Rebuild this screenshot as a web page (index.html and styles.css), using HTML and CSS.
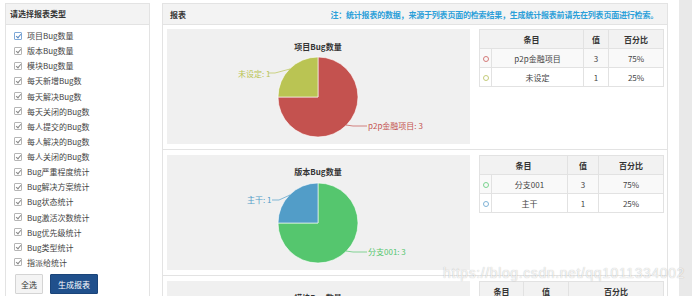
FILE: index.html
```html
<!DOCTYPE html>
<html lang="zh-CN">
<head>
<meta charset="utf-8">
<title>统计报表</title>
<link rel="stylesheet" href="styles.css">
</head>
<body>

<div class="page">

  <!-- report type picker -->
  <aside class="side">
    <div class="side-head">请选择报表类型</div>
    <ul class="types">
      <li class="focus"><span class="cb"></span>项目Bug数量</li>
      <li><span class="cb"></span>版本Bug数量</li>
      <li><span class="cb"></span>模块Bug数量</li>
      <li><span class="cb"></span>每天新增Bug数</li>
      <li><span class="cb"></span>每天解决Bug数</li>
      <li><span class="cb"></span>每天关闭的Bug数</li>
      <li><span class="cb"></span>每人提交的Bug数</li>
      <li><span class="cb"></span>每人解决的Bug数</li>
      <li><span class="cb"></span>每人关闭的Bug数</li>
      <li><span class="cb"></span>Bug严重程度统计</li>
      <li><span class="cb"></span>Bug解决方案统计</li>
      <li><span class="cb"></span>Bug状态统计</li>
      <li><span class="cb"></span>Bug激活次数统计</li>
      <li><span class="cb"></span>Bug优先级统计</li>
      <li><span class="cb"></span>Bug类型统计</li>
      <li><span class="cb"></span>指派给统计</li>
    </ul>
    <div class="btns">
      <button class="btn">全选</button>
      <button class="btn primary">生成报表</button>
    </div>
  </aside>

  <!-- reports -->
  <section class="main">
    <div class="main-head">
      <span class="title">报表</span>
      <span class="note">注：统计报表的数据，来源于列表页面的检索结果，生成统计报表前请先在列表页面进行检索。</span>
    </div>

    <div class="sec">
      <div class="chart">
        <svg width="303" height="115" viewBox="0 0 303 115">
          <text class="ctitle" x="151" y="21">项目Bug数量</text>
          <path d="M151,68 L151,28 A40,40 0 1,1 111,68 Z" fill="#c4524f" stroke="#fff" stroke-width=".6"/>
          <path d="M151,68 L111,68 A40,40 0 0,1 151,28 Z" fill="#bac453" stroke="#fff" stroke-width=".6"/>
          <polyline points="123,40 108,44 101,44" fill="none" stroke="#bac453" stroke-width=".7"/>
          <text class="lbl" x="71" y="48" fill="#bac453">未设定: 1</text>
          <polyline points="179,96 186,97 200,97" fill="none" stroke="#c4524f" stroke-width=".7"/>
          <text class="lbl" x="201" y="100" fill="#c4524f">p2p金融项目: 3</text>
        </svg>
      </div>
      <table class="stat t-a">
        <colgroup><col class="c-dot"><col class="c-name"><col class="c-val"><col class="c-pct"></colgroup>
        <tr><th colspan="2">条目</th><th>值</th><th>百分比</th></tr>
        <tr class="odd"><td><span class="ring red"></span></td><td>p2p金融项目</td><td>3</td><td>75%</td></tr>
        <tr><td><span class="ring olive"></span></td><td>未设定</td><td>1</td><td>25%</td></tr>
      </table>
    </div>

    <div class="sec">
      <div class="chart">
        <svg width="303" height="115" viewBox="0 0 303 115">
          <text class="ctitle" x="151" y="20">版本Bug数量</text>
          <path d="M151,68 L151,28 A40,40 0 1,1 111,68 Z" fill="#55c66e" stroke="#fff" stroke-width=".6"/>
          <path d="M151,68 L111,68 A40,40 0 0,1 151,28 Z" fill="#529dc8" stroke="#fff" stroke-width=".6"/>
          <polyline points="123,40 112,45 105,45" fill="none" stroke="#529dc8" stroke-width=".7"/>
          <text class="lbl" x="80" y="48" fill="#529dc8">主干: 1</text>
          <polyline points="179,96 186,97 200,97" fill="none" stroke="#55c66e" stroke-width=".7"/>
          <text class="lbl" x="201" y="100" fill="#55c66e">分支001: 3</text>
        </svg>
      </div>
      <table class="stat t-b">
        <colgroup><col class="c-dot"><col class="c-name"><col class="c-val"><col class="c-pct"></colgroup>
        <tr><th colspan="2">条目</th><th>值</th><th>百分比</th></tr>
        <tr class="odd"><td><span class="ring green"></span></td><td>分支001</td><td>3</td><td>75%</td></tr>
        <tr><td><span class="ring blue"></span></td><td>主干</td><td>1</td><td>25%</td></tr>
      </table>
    </div>

    <div class="sec">
      <div class="chart">
        <svg width="303" height="115" viewBox="0 0 303 115">
          <text class="ctitle" x="151" y="20">模块Bug数量</text>
        </svg>
      </div>
      <table class="stat t-c">
        <colgroup><col class="c-name"><col class="c-val"><col class="c-pct"></colgroup>
        <tr><th>条目</th><th>值</th><th>百分比</th></tr>
      </table>
    </div>
  </section>

  <div class="scroll"></div>
</div>

<div class="mark">https://blog.csdn.net/qq1011334002</div>

</body>
</html>
```

FILE: styles.css
```css
*{box-sizing:border-box;margin:0;padding:0}
body{
  font-family:"Noto Sans CJK SC","Liberation Sans",sans-serif;
  font-size:8px;color:#333;background:#fff;
  width:692px;height:296px;overflow:hidden;position:relative;
}

/* ---------- LAYOUT ---------- */
.page{display:flex;height:296px;padding-left:5px}
.side{width:145px;margin-top:3px;border:1px solid #e3e3e3;border-bottom:none}
.main{width:506px;margin-left:12px;margin-top:3px;border:1px solid #e3e3e3;border-bottom:none}
.scroll{width:13px;margin-left:11px;background:#e9e9e9}

/* ---------- LEFT PANEL ---------- */
.side-head{
  height:21px;line-height:20px;padding-left:4px;
  background:#f3f3f3;border-bottom:1px solid #e3e3e3;font-weight:bold;color:#333
}
.types{list-style:none;padding:3px 0 0 8px}
.types li{height:15.13px;line-height:15px;display:flex;align-items:center;color:#444}
.cb{
  width:8px;height:8px;border:1px solid #b5b5b5;border-radius:1px;background:#fff;
  margin-right:5px;position:relative;flex:none
}
.cb:after{
  content:"";position:absolute;left:2px;top:0;width:2px;height:4px;
  border:solid #888;border-width:0 1px 1px 0;transform:rotate(40deg)
}
.focus .cb{border-color:#7fa9d8}
.focus .cb:after{border-color:#5a88c0}
.btns{display:flex;gap:7px;padding:4px 0 0 9px}
.btn{
  height:20px;padding:0 5px;font:inherit;font-size:8px;
  border:1px solid #d4d4d4;background:#f4f4f4;color:#333;border-radius:1px
}
.btn.primary{background:#20508c;border-color:#1a4479;color:#fff;padding:0 7px}

/* ---------- RIGHT PANEL ---------- */
.main-head{
  height:21px;display:flex;align-items:center;justify-content:space-between;
  padding:0 9px 0 7px;background:#f3f3f3;border-bottom:1px solid #e3e3e3
}
.main-head .title{font-weight:bold}
.main-head .note{color:#2b9fd9;font-weight:bold;letter-spacing:-.2px}

.sec{display:flex;gap:9px;align-items:flex-start;padding:4px 4px 5px;border-bottom:1px solid #e3e3e3}
.sec+.sec{padding-top:5px}
.chart{width:303px;height:115px;background:#f0f0f0;flex:none}
.chart svg{display:block}
.ctitle{font-size:8px;font-weight:bold;fill:#333;text-anchor:middle}
.lbl{font-size:8px}

/* ---------- TABLES ---------- */
.stat{width:184px;border-collapse:collapse;table-layout:fixed;border:1px solid #e2e2e2;color:#444}
.stat th,.stat td{border:1px solid #e2e2e2;height:19px;text-align:center;font-size:8px;padding:0}
.stat th{background:#f2f2f2;font-weight:bold;color:#333}
.stat tr.odd td{background:#f9f9f9}
.t-a .c-dot{width:12px}.t-a .c-name{width:92px}.t-a .c-val{width:25px}.t-a .c-pct{width:55px}
.t-b .c-dot{width:12px}.t-b .c-name{width:76px}.t-b .c-val{width:31px}.t-b .c-pct{width:65px}
.t-c .c-name{width:44px}.t-c .c-val{width:45px}.t-c .c-pct{width:95px}
.ring{display:inline-block;width:6px;height:6px;border-radius:50%;border:1px solid;vertical-align:middle}
.ring.red{border-color:#d47a78}.ring.olive{border-color:#c4cb7a}
.ring.green{border-color:#7ad48f}.ring.blue{border-color:#7fb3d6}

/* ---------- WATERMARK ---------- */
.mark{
  position:absolute;left:443px;top:265px;
  font-family:"Liberation Sans",Arial,sans-serif;font-size:14px;letter-spacing:.6px;
  color:rgba(255,255,255,.8);text-shadow:0 0 1px rgba(0,0,0,.3);
  pointer-events:none;white-space:nowrap
}
```
